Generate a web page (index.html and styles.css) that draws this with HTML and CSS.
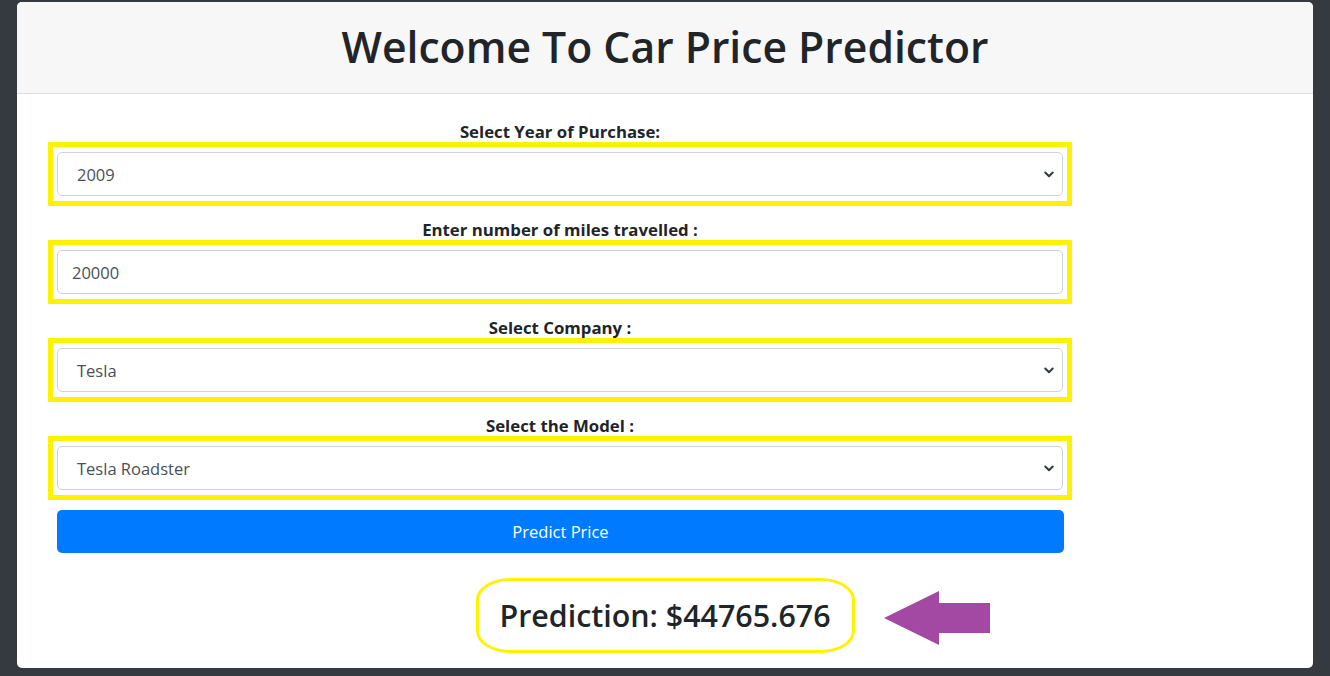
FILE: index.html
```html
<!DOCTYPE html>
<html lang="en">
<head>
<meta charset="utf-8">
<title>Car Price Predictor</title>
<link rel="stylesheet" href="styles.css">
</head>
<body>
<div class="card">
  <div class="card-header">
    <h1 class="title">Welcome To Car Price Predictor</h1>
  </div>
  <div class="card-body">
    <form class="form">
      <div class="group">
        <label class="label">Select Year of Purchase:</label>
        <div class="hl">
          <div class="control select"><span>2009</span>
            <svg class="chev" width="10" height="7" viewBox="0 0 10 7"><path d="M1.3 1.5 L5 5.2 L8.7 1.5" fill="none" stroke="#343a40" stroke-width="2" stroke-linecap="round" stroke-linejoin="round"/></svg>
          </div>
        </div>
      </div>
      <div class="group">
        <label class="label">Enter number of miles travelled :</label>
        <div class="hl">
          <div class="control"><span>20000</span></div>
        </div>
      </div>
      <div class="group">
        <label class="label">Select Company :</label>
        <div class="hl">
          <div class="control select"><span>Tesla</span>
            <svg class="chev" width="10" height="7" viewBox="0 0 10 7"><path d="M1.3 1.5 L5 5.2 L8.7 1.5" fill="none" stroke="#343a40" stroke-width="2" stroke-linecap="round" stroke-linejoin="round"/></svg>
          </div>
        </div>
      </div>
      <div class="group">
        <label class="label">Select the Model :</label>
        <div class="hl">
          <div class="control select"><span>Tesla Roadster</span>
            <svg class="chev" width="10" height="7" viewBox="0 0 10 7"><path d="M1.3 1.5 L5 5.2 L8.7 1.5" fill="none" stroke="#343a40" stroke-width="2" stroke-linecap="round" stroke-linejoin="round"/></svg>
          </div>
        </div>
      </div>
      <button type="button" class="btn">Predict Price</button>
    </form>
    <div class="result">
      <div class="pred-box">
        <h2 class="pred">Prediction: $44765.676</h2>
        <svg class="arrow" width="106" height="56" viewBox="0 0 106 56"><polygon points="0,27 55,0 55,12 106,12 106,42 55,42 55,54" fill="#a349a4"/></svg>
      </div>
    </div>
  </div>
</div>
</body>
</html>
```
FILE: styles.css
```css
html, body {
  margin: 0;
  padding: 0;
}
body {
  background: #343a40;
  padding: 2px 17px 8px 17px;
  font-family: "Open Sans", "Noto Sans", sans-serif;
  color: #212529;
}
.card {
  background: #ffffff;
  border-radius: 5px;
  height: 666px;
  overflow: hidden;
  display: flex;
  flex-direction: column;
}
.card-header {
  background: #f7f7f7;
  border-bottom: 1px solid #e0e0e0;
  height: 91px;
  display: flex;
  align-items: center;
  justify-content: center;
}
.title {
  margin: 0 0 2px 0;
  font-size: 42.7px;
  font-weight: 600;
  color: #212529;
}
.card-body {
  padding: 26px 0 0 0;
  display: flex;
  flex-direction: column;
}
.form {
  margin-left: 31px;
  width: 1024px;
  display: flex;
  flex-direction: column;
}
.group {
  display: flex;
  flex-direction: column;
  align-items: stretch;
  margin-bottom: 12px;
}
.label {
  display: block;
  text-align: center;
  font-size: 16.8px;
  font-weight: 700;
  line-height: 22px;
  height: 22px;
  color: #212529;
  padding-top: 1px;
}
.hl {
  border: 5px solid #fff200;
  padding: 5px 4px;
  margin-top: -1px;
}
.control {
  height: 42px;
  border: 1px solid #ced4da;
  border-radius: 5px;
  display: flex;
  align-items: center;
  padding: 0 8px 0 18px;
  font-size: 16.5px;
  color: #495057;
  background: #fff;
}
.control.select span {
  flex: 1;
}
.select span { padding-left: 1px; }
.control:not(.select) {
  padding-left: 14px;
}
.chev {
  display: block;
}
.btn {
  margin: -2px 8px 0 9px;
  height: 43px;
  border: none;
  border-radius: 5px;
  background: #007bff;
  color: #fff;
  font-family: "Open Sans", "Noto Sans", sans-serif;
  font-size: 16.5px;
  padding: 0;
}
.result {
  margin-top: 25px;
  display: flex;
  justify-content: center;
}
.pred-box {
  position: relative;
  width: 373px;
  height: 69px;
  border: 3px solid #fff200;
  border-radius: 34px / 22px;
  display: flex;
  align-items: center;
  justify-content: center;
}
.pred {
  margin: 0;
  font-size: 30.4px;
  font-weight: 600;
  color: #212529;
}
.arrow {
  position: absolute;
  left: 405px;
  top: 10px;
}
```
